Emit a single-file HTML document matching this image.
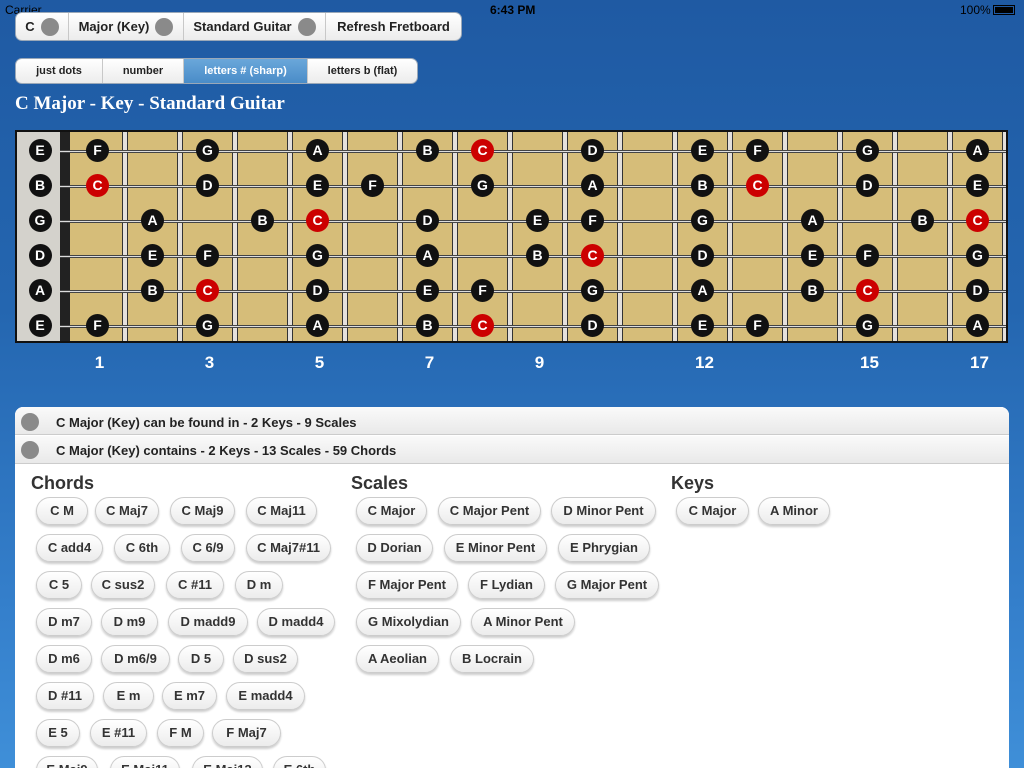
<!DOCTYPE html>
<html style="overflow:hidden;width:1024px;height:768px"><head><meta charset="utf-8">
<style>
*{box-sizing:border-box;margin:0;padding:0}
body{width:1024px;height:768px;overflow:hidden;position:relative;font-family:"Liberation Sans",sans-serif;background:linear-gradient(#1f5aa3 0%,#2466b0 40%,#3580cc 80%,#3f8fd8 100%)}
.abs{position:absolute}
.seg{position:absolute;background:linear-gradient(#fff,#ececec);border:1px solid #9aa8b8;border-radius:7px;overflow:hidden;display:flex}
.seg div{border-right:1px solid #c8c8c8;display:flex;align-items:center;justify-content:center;font-weight:bold;color:#222;height:100%}
.seg div:last-child{border-right:none}
.gd{display:inline-block;width:18px;height:18px;border-radius:50%;background:#8a8a8a;margin-left:6px}
.fb{position:absolute;left:15px;top:130px;width:993px;height:213px;border:2px solid #111;background:#d6bd79;overflow:hidden}
.n{position:absolute;width:23px;height:23px;border-radius:50%;background:#111;color:#fff;font-weight:bold;font-size:14px;line-height:23px;text-align:center;margin:-11.5px 0 0 -11.5px}
.n.r{background:#c00}
.btn{position:absolute;height:28px;border-radius:14px;background:linear-gradient(#fff,#ececec);border:1px solid #ccc;box-shadow:0 2px 2px rgba(0,0,0,.2);font-weight:bold;font-size:13px;color:#333;line-height:26px;text-align:center}
.h{position:absolute;font-size:18px;font-weight:bold;color:#333}
#wrap{position:absolute;left:0;top:0;width:1024px;height:768px;overflow:hidden}
</style></head><body><div id="wrap">
<div class="abs" style="left:5px;top:3px;font-size:12px;color:#000">Carrier</div>
<div class="abs" style="left:490px;top:3px;font-size:12px;font-weight:bold;color:#000">6:43 PM</div>
<div class="abs" style="left:960px;top:3px;font-size:12px;color:#000">100%</div>
<div class="abs" style="left:993px;top:5px;width:22px;height:10px;border:1px solid #000;padding:1px"><div style="background:#000;height:100%"></div></div>

<div class="seg" style="left:15px;top:12px;width:447px;height:29px;font-size:13px">
<div style="width:53px">C<span class="gd"></span></div>
<div style="width:115px">Major (Key)<span class="gd"></span></div>
<div style="width:142px">Standard Guitar<span class="gd"></span></div>
<div style="flex:1">Refresh Fretboard</div></div>

<div class="seg" style="left:15px;top:58px;width:403px;height:26px;font-size:11px">
<div style="width:87px">just dots</div>
<div style="width:81px">number</div>
<div style="width:124px;background:linear-gradient(#6aa7da,#4a8cc8);color:#fff">letters # (sharp)</div>
<div style="flex:1">letters b (flat)</div></div>

<div class="abs" style="left:15px;top:93px;font-family:'Liberation Serif',serif;font-weight:bold;font-size:19px;color:#fff">C Major - Key - Standard Guitar</div>

<div class="fb" id="fb"></div>
<div id="nums"></div>

<div class="abs" style="left:15px;top:407px;width:994px;height:361px;background:#fff;border-radius:8px 8px 0 0;overflow:hidden">
<div class="abs" style="left:0;top:0;width:994px;height:28px;background:linear-gradient(#fafafa,#e9e9e9);border-bottom:1px solid #ccc"></div>
<div class="abs" style="left:0;top:29px;width:994px;height:28px;background:linear-gradient(#fafafa,#e9e9e9);border-bottom:1px solid #ccc"></div>
<div class="abs" style="left:6px;top:6px;width:18px;height:18px;border-radius:50%;background:#8a8a8a"></div>
<div class="abs" style="left:6px;top:34px;width:18px;height:18px;border-radius:50%;background:#8a8a8a"></div>
<div class="abs" style="left:41px;top:8px;font-size:13px;font-weight:bold;color:#222">C Major (Key) can be found in - 2 Keys - 9 Scales</div>
<div class="abs" style="left:41px;top:36px;font-size:13px;font-weight:bold;color:#222">C Major (Key) contains - 2 Keys - 13 Scales - 59 Chords</div>
<div class="h" style="left:16px;top:66px">Chords</div>
<div class="h" style="left:336px;top:66px">Scales</div>
<div class="h" style="left:656px;top:66px">Keys</div>
<div id="btns"></div>
</div>
</div>
<script>
var fb=document.getElementById('fb'),h='';
h+='<div class="abs" style="left:0;top:0;width:43px;height:100%;background:#d4d2cc"></div>';
h+='<div class="abs" style="left:43px;top:0;width:10px;height:100%;background:#222"></div>';
for(var i=1;i<=17;i++){var x=53+55*i-2;h+='<div class="abs" style="left:'+(x-1)+'px;top:0;width:6px;height:100%;background:#e4e0dc;border-left:1px solid #333;border-right:1px solid #333"></div>';}
var ys=[150,185,220,255,290,325];
ys.forEach(function(y){h+='<div class="abs" style="left:43px;top:'+(y-131-1)+'px;width:960px;height:3px;background:#ddd;border-top:1px solid #444;border-bottom:1px solid #444"></div>';});
var rows=[['E',[1,'F'],[3,'G'],[5,'A'],[7,'B'],[8,'C'],[10,'D'],[12,'E'],[13,'F'],[15,'G'],[17,'A']],
['B',[1,'C'],[3,'D'],[5,'E'],[6,'F'],[8,'G'],[10,'A'],[12,'B'],[13,'C'],[15,'D'],[17,'E']],
['G',[2,'A'],[4,'B'],[5,'C'],[7,'D'],[9,'E'],[10,'F'],[12,'G'],[14,'A'],[16,'B'],[17,'C']],
['D',[2,'E'],[3,'F'],[5,'G'],[7,'A'],[9,'B'],[10,'C'],[12,'D'],[14,'E'],[15,'F'],[17,'G']],
['A',[2,'B'],[3,'C'],[5,'D'],[7,'E'],[8,'F'],[10,'G'],[12,'A'],[14,'B'],[15,'C'],[17,'D']],
['E',[1,'F'],[3,'G'],[5,'A'],[7,'B'],[8,'C'],[10,'D'],[12,'E'],[13,'F'],[15,'G'],[17,'A']]];
rows.forEach(function(r,k){var y=ys[k]-132;h+='<div class="n" style="left:23px;top:'+y+'px">'+r[0]+'</div>';
for(var j=1;j<r.length;j++){var f=r[j][0],x=70+55*(f-0.5)-17;h+='<div class="n'+(r[j][1]=='C'?' r':'')+'" style="left:'+x+'px;top:'+y+'px">'+r[j][1]+'</div>';}});
fb.innerHTML=h;
var nh='';[1,3,5,7,9,12,15,17].forEach(function(f){var x=72+55*(f-0.5);nh+='<div class="abs" style="left:'+(x-20)+'px;width:40px;text-align:center;top:353px;font-size:17px;font-weight:bold;color:#fff">'+f+'</div>';});
document.getElementById('nums').innerHTML=nh;
var B=[[497,[['C M',36,88],['C Maj7',95,159],['C Maj9',170,235],['C Maj11',246,317],['C Major',356,427],['C Major Pent',438,541],['D Minor Pent',551,656],['C Major',676,749],['A Minor',758,830]]],
[534,[['C add4',36,103],['C 6th',114,170],['C 6/9',181,235],['C Maj7#11',246,331],['D Dorian',356,433],['E Minor Pent',444,547],['E Phrygian',558,650]]],
[571,[['C 5',36,82],['C sus2',91,155],['C #11',166,224],['D m',235,283],['F Major Pent',356,458],['F Lydian',468,545],['G Major Pent',555,659]]],
[608,[['D m7',36,92],['D m9',101,158],['D madd9',168,248],['D madd4',257,335],['G Mixolydian',356,461],['A Minor Pent',471,575]]],
[645,[['D m6',36,92],['D m6/9',101,170],['D 5',178,224],['D sus2',233,298],['A Aeolian',356,439],['B Locrain',450,534]]],
[682,[['D #11',36,94],['E m',103,154],['E m7',162,217],['E madd4',226,305]]],
[719,[['E 5',36,80],['E #11',90,147],['F M',157,204],['F Maj7',212,281]]],
[756,[['E Maj9',36,98],['E Maj11',110,180],['E Maj13',192,263],['E 6th',273,326]]]];
var bh='';B.forEach(function(r){r[1].forEach(function(b){bh+='<div class="btn" style="left:'+(b[1]-15)+'px;top:'+(r[0]-407)+'px;width:'+(b[2]-b[1])+'px">'+b[0]+'</div>';});});
document.getElementById('btns').innerHTML=bh;
</script>
</body></html>
